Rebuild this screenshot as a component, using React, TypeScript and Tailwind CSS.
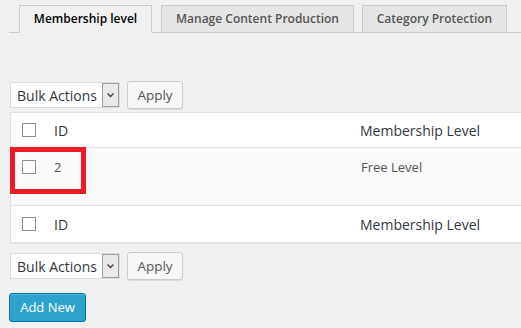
import React from "react";

function Checkbox() {
  return <div className="w-[14px] h-[14px] border border-[#8c8f94] bg-white shrink-0" />;
}

function Bulk() {
  return (
    <div className="flex items-center">
      <div className="flex items-stretch h-[26px] w-[110px] border border-[#dcdcdc] bg-white">
        <div className="flex-1 flex items-center pl-[6px] text-[14px] text-[#32373c]">Bulk Actions</div>
        <div className="w-[17px] border border-[#a0a0a0] bg-[#e9e9e9] flex items-center justify-center">
          <svg width="9" height="6" viewBox="0 0 9 6">
            <path d="M1.5 1.5 L4.5 4.5 L7.5 1.5" stroke="#444" strokeWidth="1.4" fill="none" />
          </svg>
        </div>
      </div>
      <div className="ml-[7px] h-[28px] w-[56px] rounded-[3px] border border-[#cccccc] bg-[#f7f7f7] shadow-[0_1px_0_#ddd] flex items-center justify-center text-[13.5px] text-[#555]">
        Apply
      </div>
    </div>
  );
}

export default function App() {
  return (
    <div
      className="w-[521px] h-[328px] bg-[#f1f1f1] overflow-hidden"
      style={{ fontFamily: '"Open Sans", sans-serif' }}
    >
      <div className="ml-[9px] pt-[5px] border-b border-[#cccccc] flex items-end h-[33px]">
        <div className="ml-[10px] w-[133px] h-[28px] -mb-px border border-[#cccccc] border-b-[#f1f1f1] bg-[#f1f1f1] flex items-center justify-center text-[12px] font-semibold text-black">
          Membership level
        </div>
        <div className="ml-[9px] w-[193px] h-[27px] border border-b-0 border-[#cccccc] bg-[#e5e5e5] flex items-center justify-center text-[12px] font-semibold text-[#555]">
          Manage Content Production
        </div>
        <div className="ml-[8px] w-[145px] h-[27px] border border-b-0 border-[#cccccc] bg-[#e5e5e5] flex items-center justify-center text-[12px] font-semibold text-[#555]">
          Category Protection
        </div>
      </div>

      <div className="pl-[10px] pt-[48px]">
        <Bulk />
        <div className="mt-[3px] w-[560px] border border-[#e1e1e1] bg-white shadow-[0_1px_1px_rgba(0,0,0,0.04)]">
          <div className="h-[35px] flex items-center border-b border-[#e1e1e1] text-[14px] text-[#32373c]">
            <div className="ml-[11px]"><Checkbox /></div>
            <div className="ml-[18px] w-[306px]">ID</div>
            <div>Membership Level</div>
          </div>
          <div className="h-[58px] bg-[#f9f9f9] border-b border-[#e1e1e1] relative">
            <div className="flex items-start pt-[11px] text-[13px] text-[#555]">
              <div className="ml-[11px] mt-[1px]"><Checkbox /></div>
              <div className="ml-[18px] w-[307px] leading-[16px]">2</div>
              <div className="leading-[16px]">Free Level</div>
            </div>
            <div className="absolute left-[-1px] top-[-1px] w-[76px] h-[47px] border-[5px] border-[#ed1c24]" />
          </div>
          <div className="h-[36px] flex items-center text-[14px] text-[#32373c]">
            <div className="ml-[11px]"><Checkbox /></div>
            <div className="ml-[18px] w-[306px]">ID</div>
            <div>Membership Level</div>
          </div>
        </div>
        <div className="mt-[9px]">
          <Bulk />
        </div>
        <div className="mt-[13px] -ml-px w-[77px] h-[29px] rounded-[3px] border border-[#0074a2] bg-[#2ea2cc] shadow-[inset_0_1px_0_rgba(120,200,230,0.5)] flex items-center justify-center text-[13px] text-white">
          Add New
        </div>
      </div>
    </div>
  );
}
